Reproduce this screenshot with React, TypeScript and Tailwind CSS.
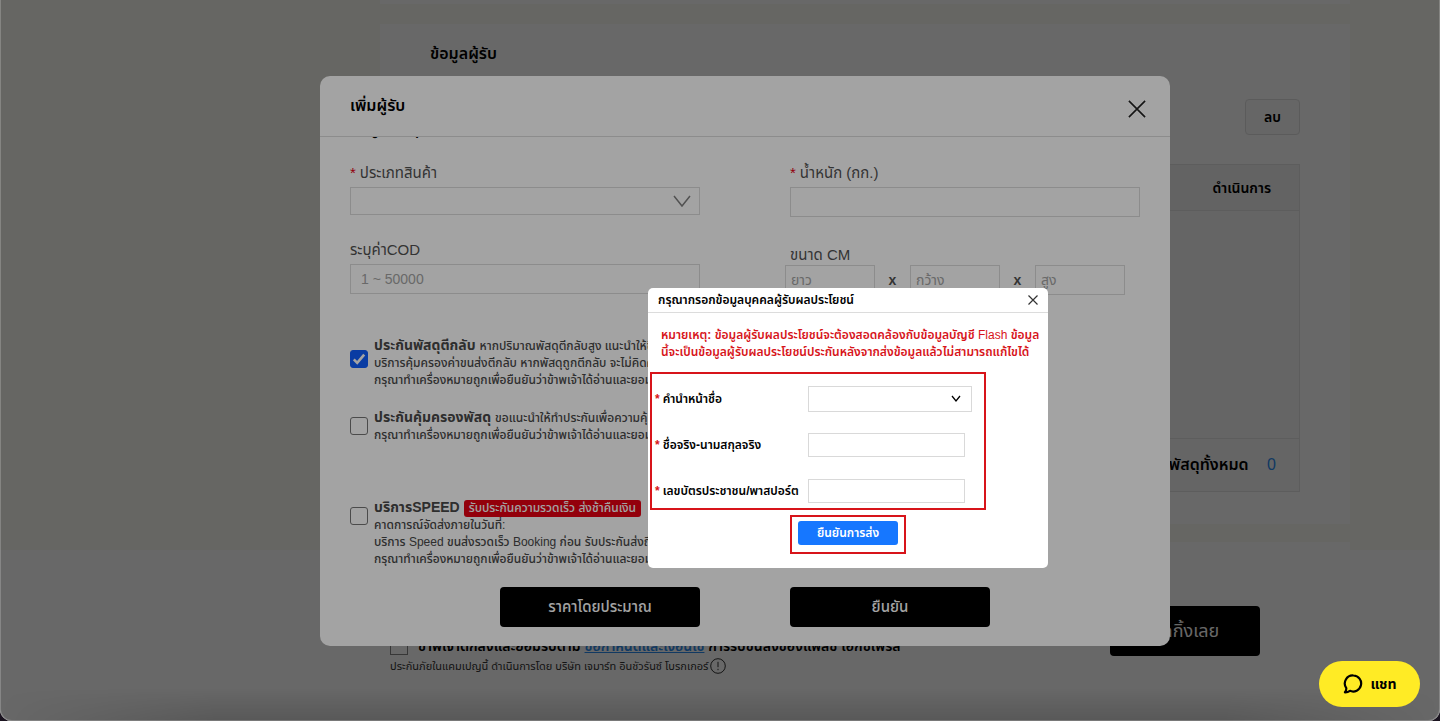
import type { ReactNode } from 'react';
import { clsx } from 'clsx';

function CloseIcon({ className }: { className: string }) {
  return (
    <svg viewBox="0 0 20 20" fill="none" stroke="currentColor" className={className}>
      <path d="M1 1 19 19M19 1 1 19" vectorEffect="non-scaling-stroke" />
    </svg>
  );
}

function ChevronIcon({ className }: { className: string }) {
  return (
    <svg viewBox="0 0 16 10" fill="none" stroke="currentColor" className={className}>
      <path d="M0 0 8 10 16 0" vectorEffect="non-scaling-stroke" />
    </svg>
  );
}

// Section of the booking page behind the dialogs
function RecipientCard() {
  return (
    <section className="bg-white px-[50px] pb-8">
      <h2 className="pt-4 text-base leading-7 font-semibold text-black">ข้อมูลผู้รับ</h2>
      <div className="mt-[31px] flex justify-end">
        <button
          type="button"
          className="h-9 w-[55px] rounded-sm border border-[#e0e0e0] bg-[#fbfbfb] text-sm font-semibold text-black"
        >
          ลบ
        </button>
      </div>
      <table className="mt-[29px] w-full border-collapse border border-[#e4e4e4] bg-[#f9f9f9] text-sm text-black">
        <thead>
          <tr className="h-[46px] border-b border-[#e4e4e4] bg-[#f2f2f2]">
            <th className="px-7 text-right font-semibold">ดำเนินการ</th>
          </tr>
        </thead>
        <tbody>
          <tr className="h-[228px]">
            <td />
          </tr>
        </tbody>
        <tfoot>
          <tr className="h-[53px] border-t border-[#e4e4e4]">
            <td className="pr-[23px] text-right text-base font-semibold">
              จำนวนพัสดุทั้งหมด <span className="ml-[14px] font-normal text-[#2d8cf0]">0</span>
            </td>
          </tr>
        </tfoot>
      </table>
    </section>
  );
}

function BookingFooter() {
  return (
    <footer className="flex flex-1 items-start bg-white pt-14 pr-[180px] pl-[390px]">
      <div className="flex-1 pt-[28px] whitespace-nowrap">
        <label className="flex items-center gap-[10px] text-sm leading-6 font-semibold text-black">
          <input type="checkbox" className="size-[18px] appearance-none border border-[#888]" />
          <span>
            ข้าพเจ้าตกลงและยอมรับตาม{' '}
            <a href="#terms" className="text-[#2d8cf0] underline">
              ข้อกำหนดและเงื่อนไข
            </a>{' '}
            การรับขนส่งของแฟลช เอ็กซ์เพรส
          </span>
        </label>
        <p className="flex items-center gap-[2px] text-[11px] leading-4 text-[#333]">
          ประกันภัยในแคมเปญนี้ ดำเนินการโดย บริษัท เจมาร์ท อินชัวรันซ์ โบรกเกอร์
          <svg viewBox="0 0 16 16" fill="none" stroke="#333" className="size-4">
            <circle cx="8" cy="8" r="7.3" />
            <path d="M8 3.8v5.4M8 10.8v1.4" />
          </svg>
        </p>
      </div>
      <button type="button" className="h-[50px] w-[150px] rounded-sm bg-black text-lg text-white">
        บุคกิ้งเลย
      </button>
    </footer>
  );
}

const fieldBox = 'block w-full border border-[#dcdcdc] bg-transparent px-[10px] text-sm outline-none';

function Label({ htmlFor, required, children }: { htmlFor: string; required?: boolean; children: ReactNode }) {
  return (
    <label htmlFor={htmlFor} className="flex gap-1 text-[15px] leading-5 text-[#515151]">
      {required && <span className="text-[#e60012]">*</span>}
      <span>{children}</span>
    </label>
  );
}

function ServiceOption({
  id,
  title,
  badge,
  note,
  lines,
  checked,
  className,
}: {
  id: string;
  title: string;
  badge?: string;
  note?: string;
  lines: string[];
  checked?: boolean;
  className?: string;
}) {
  return (
    <div className={clsx('flex items-start gap-[6px] text-[#484848]', className)}>
      <span className={clsx('relative flex', checked ? 'mt-[13px]' : 'mt-2')}>
        <input
          id={id}
          type="checkbox"
          defaultChecked={checked}
          className="peer size-[18px] appearance-none rounded-[3px] border border-[#767676] checked:border-[#0f5fff] checked:bg-[#0f5fff]"
        />
        <svg
          viewBox="0 0 18 18"
          fill="none"
          stroke="#fff"
          strokeWidth="2.6"
          className="pointer-events-none absolute inset-0 hidden size-[18px] peer-checked:block"
        >
          <path d="M3.8 9.4 7.2 12.8 14.2 4.6" />
        </svg>
      </span>
      <label htmlFor={id} className="text-xs leading-[17px] font-medium whitespace-nowrap">
        <span className="block">
          <b className="text-sm leading-[17px]">{title}</b>
          {badge && (
            <span className="ml-1 inline-block rounded-[3px] bg-[#e60012] px-[5px] text-white">{badge}</span>
          )}
          {note && <span className="ml-1">{note}</span>}
        </span>
        {lines.map((line) => (
          <span key={line} className="block">
            {line}
          </span>
        ))}
      </label>
    </div>
  );
}

function RecipientDialog() {
  return (
    <div role="dialog" className="flex h-[570px] w-[850px] flex-col overflow-hidden rounded-[10px] bg-white">
      <header className="flex h-[61px] shrink-0 items-center justify-between border-b border-[#dcdcdc] pr-6 pl-[30px]">
        <h2 className="text-base leading-6 font-semibold text-black">เพิ่มผู้รับ</h2>
        <button type="button" aria-label="ปิด" className="pt-[6px] text-[#222]">
          <CloseIcon className="size-[18px] overflow-visible stroke-[1.6px]" />
        </button>
      </header>
      <div className="min-h-0 flex-1 overflow-hidden px-[30px]">
        <h3 className="-mt-5 text-base leading-6 font-semibold text-black">ข้อมูลพัสดุ</h3>
        <div className="mt-[22px] flex gap-[90px]">
          <div className="flex-1">
            <Label htmlFor="goods" required>
              ประเภทสินค้า
            </Label>
            <div className="relative mt-1">
              <select id="goods" className={clsx(fieldBox, 'h-7 appearance-none')} />
              <ChevronIcon className="pointer-events-none absolute top-[9px] right-[10px] h-[10px] w-4 overflow-visible text-[#808080] stroke-[1.5px]" />
            </div>
            <div className="mt-[25px]">
              <Label htmlFor="cod">ระบุค่าCOD</Label>
            </div>
            <input id="cod" placeholder="1 ~ 50000" className={clsx(fieldBox, 'mt-1 h-[30px] placeholder:text-[#a5a5a5]')} />
          </div>
          <div className="flex-1">
            <Label htmlFor="weight" required>
              น้ำหนัก (กก.)
            </Label>
            <input id="weight" className={clsx(fieldBox, 'mt-1 h-[30px]')} />
            <div className="mt-7">
              <Label htmlFor="length">ขนาด CM</Label>
            </div>
            <div className="-ml-[5px] flex items-center text-sm font-bold text-[#515151]">
              {['ยาว', 'กว้าง', 'สูง'].map((name, i) => (
                <div key={name} className="flex items-center">
                  {i > 0 && <span className="w-[35px] text-center">x</span>}
                  <input
                    id={i === 0 ? 'length' : undefined}
                    aria-label={name}
                    placeholder={name}
                    className="h-[30px] w-[90px] border border-[#dcdcdc] px-[5px] font-normal outline-none placeholder:text-[#a5a5a5]"
                  />
                </div>
              ))}
            </div>
          </div>
        </div>
        <ServiceOption
          id="return"
          checked
          className="mt-[42px]"
          title="ประกันพัสดุตีกลับ"
          note="หากปริมาณพัสดุตีกลับสูง แนะนำให้ซื้อประกัน"
          lines={[
            'บริการคุ้มครองค่าขนส่งตีกลับ หากพัสดุถูกตีกลับ จะไม่คิดค่าขนส่ง',
            'กรุณาทำเครื่องหมายถูกเพื่อยืนยันว่าข้าพเจ้าได้อ่านและยอมรับ',
          ]}
        />
        <ServiceOption
          id="parcel"
          className="mt-5"
          title="ประกันคุ้มครองพัสดุ"
          note="ขอแนะนำให้ทำประกันเพื่อความคุ้มครอง"
          lines={['กรุณาทำเครื่องหมายถูกเพื่อยืนยันว่าข้าพเจ้าได้อ่านและยอมรับ']}
        />
        <ServiceOption
          id="speed"
          className="mt-[55px]"
          title="บริการSPEED"
          badge="รับประกันความรวดเร็ว ส่งช้าคืนเงิน"
          lines={[
            'คาดการณ์จัดส่งภายในวันที่:',
            'บริการ Speed ขนส่งรวดเร็ว Booking ก่อน รับประกันส่งถึงเร็ว',
            'กรุณาทำเครื่องหมายถูกเพื่อยืนยันว่าข้าพเจ้าได้อ่านและยอมรับ',
          ]}
        />
        <div className="mt-[19px] flex justify-center gap-[90px] text-[15px] font-medium text-white">
          <button type="button" className="h-10 w-[200px] rounded-sm bg-black">
            ราคาโดยประมาณ
          </button>
          <button type="button" className="h-10 w-[200px] rounded-sm bg-black">
            ยืนยัน
          </button>
        </div>
      </div>
    </div>
  );
}

function FormRow({ id, label, children }: { id: string; label: string; children: ReactNode }) {
  return (
    <div className="flex h-[26px] items-center">
      <label htmlFor={id} className="flex w-[153px] gap-[3px] text-xs leading-5 font-semibold whitespace-nowrap text-black">
        <span className="text-[#d7141a]">*</span>
        {label}
      </label>
      {children}
    </div>
  );
}

function BeneficiaryDialog() {
  return (
    <div role="dialog" className="h-[280px] w-[400px] overflow-hidden rounded-[5px] bg-white">
      <header className="flex h-[25px] items-center justify-between border-b border-[#dcdcdc] pr-[10px] pl-[10px]">
        <h2 className="text-xs leading-5 font-semibold text-black">กรุณากรอกข้อมูลบุคคลผู้รับผลประโยชน์</h2>
        <button type="button" aria-label="ปิด" className="text-[#333]">
          <CloseIcon className="size-[10px] overflow-visible stroke-[1.2px]" />
        </button>
      </header>
      <p className="mt-[14px] pl-[13px] text-xs leading-[17px] font-semibold whitespace-nowrap text-[#d7141a]">
        หมายเหตุ: ข้อมูลผู้รับผลประโยชน์จะต้องสอดคล้องกับข้อมูลบัญชี <span className="font-medium">Flash</span> ข้อมูล
        <br />
        นี้จะเป็นข้อมูลผู้รับผลประโยชน์ประกันหลังจากส่งข้อมูลแล้วไม่สามารถแก้ไขได้
      </p>
      <div className="mt-[11px] ml-[2px] flex h-[138px] w-[336px] flex-col gap-5 border-2 border-[#d7141a] pt-3 pl-[3px]">
        <FormRow id="prefix" label="คำนำหน้าชื่อ">
          <div className="relative w-[164px]">
            <select id="prefix" className="block h-[26px] w-full appearance-none border border-[#d9d9d9] outline-none" />
            <ChevronIcon className="pointer-events-none absolute top-[10px] right-[11px] h-[5px] w-[10px] overflow-visible text-black stroke-[1.3px]" />
          </div>
        </FormRow>
        <FormRow id="fullname" label="ชื่อจริง-นามสกุลจริง">
          <input id="fullname" className="h-6 w-[157px] border border-[#d9d9d9] px-2 text-xs outline-none" />
        </FormRow>
        <FormRow id="idcard" label="เลขบัตรประชาชน/พาสปอร์ต">
          <input id="idcard" className="h-6 w-[157px] border border-[#d9d9d9] px-2 text-xs outline-none" />
        </FormRow>
      </div>
      <div className="mx-auto mt-[5px] h-[39px] w-[116px] border-2 border-[#d7141a] px-[6px] pt-1">
        <button type="button" className="block h-6 w-full rounded-[3px] bg-[#1677ff] text-xs font-semibold text-white">
          ยืนยันการส่ง
        </button>
      </div>
    </div>
  );
}

export default function App() {
  return (
    <div className="bg-[#1b1420] font-['Liberation_Sans','Noto_Sans_Thai',sans-serif]">
      <div className="relative flex min-h-screen flex-col overflow-hidden rounded-b-xl bg-[#fbfaf3]">
        <main className="pr-[90px] pl-[380px]">
          <div className="h-1 bg-white" />
          <div className="h-5" />
          <RecipientCard />
          <div className="h-[18px]" />
          <div className="h-2 bg-white" />
        </main>
        <BookingFooter />

        <div className="absolute inset-0 flex items-start justify-center bg-black/36 pt-[76px] pl-[50px]">
          <RecipientDialog />
        </div>
        <div className="absolute inset-0 flex items-start justify-center bg-black/36 pt-[288px] pl-64">
          <BeneficiaryDialog />
        </div>

        <div className="pointer-events-none absolute inset-x-0 bottom-0 h-8 bg-linear-to-t from-black/15 to-transparent mask-x-from-85%" />
        <div className="pointer-events-none absolute inset-0 rounded-b-xl border border-t-0 border-white/20" />

        <button
          type="button"
          className="absolute right-5 bottom-[14px] flex h-[46px] w-[101px] items-center justify-center gap-2 rounded-full bg-[#ffeb25] text-sm font-bold text-black"
        >
          <svg viewBox="0 0 20 20" fill="none" stroke="currentColor" strokeWidth="2.2" className="size-5">
            <path
              d="M10.500 1.500a8 8 0 1 1-3.600 15.300c-1.500 1.100-3.200 1.600-5 1.500 1-1.100 1.500-2.500 1.400-4.200A8 8 0 0 1 10.500 1.500Z"
              strokeLinejoin="round"
            />
          </svg>
          แชท
        </button>
      </div>
    </div>
  );
}
